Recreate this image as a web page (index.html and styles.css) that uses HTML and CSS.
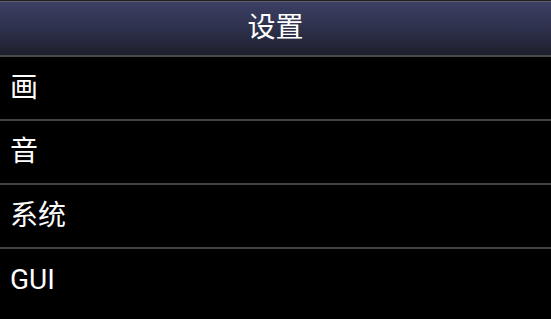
FILE: index.html
```html
<!DOCTYPE html>
<html lang="zh">
<head>
<meta charset="utf-8">
<title>设置</title>
<link rel="stylesheet" href="styles.css">
</head>
<body>
<div class="screen">
  <header class="titlebar"><span class="title">设置</span></header>
  <ul class="menu">
    <li class="item">画</li>
    <li class="item">音</li>
    <li class="item">系统</li>
    <li class="item">GUI</li>
  </ul>
</div>
</body>
</html>
```
FILE: styles.css
```css
html, body {
  margin: 0;
  padding: 0;
  background: #000;
}
.screen {
  width: 551px;
  height: 319px;
  overflow: hidden;
  background: #000;
  font-family: Roboto, "Noto Sans CJK SC", sans-serif;
  color: #fff;
}
.titlebar {
  height: 54px;
  border-top: 1px solid #1e1e22;
  border-bottom: 2px solid #4a4a4c;
  box-shadow: inset 0 1px 0 #606168;
  background: linear-gradient(to bottom, #3c4064 0%, #30334f 45%, #1d1f2d 100%);
  display: flex;
  align-items: center;
  justify-content: center;
}
.title {
  font-size: 28px;
  line-height: 1;
  color: #fff;
}
.menu {
  list-style: none;
  margin: 0;
  padding: 0;
}
.item {
  height: 62px;
  border-bottom: 2px solid #434343;
  display: flex;
  align-items: center;
  padding-left: 10px;
  font-size: 28px;
  line-height: 1;
}
.item:last-child {
  border-bottom: none;
}
```
